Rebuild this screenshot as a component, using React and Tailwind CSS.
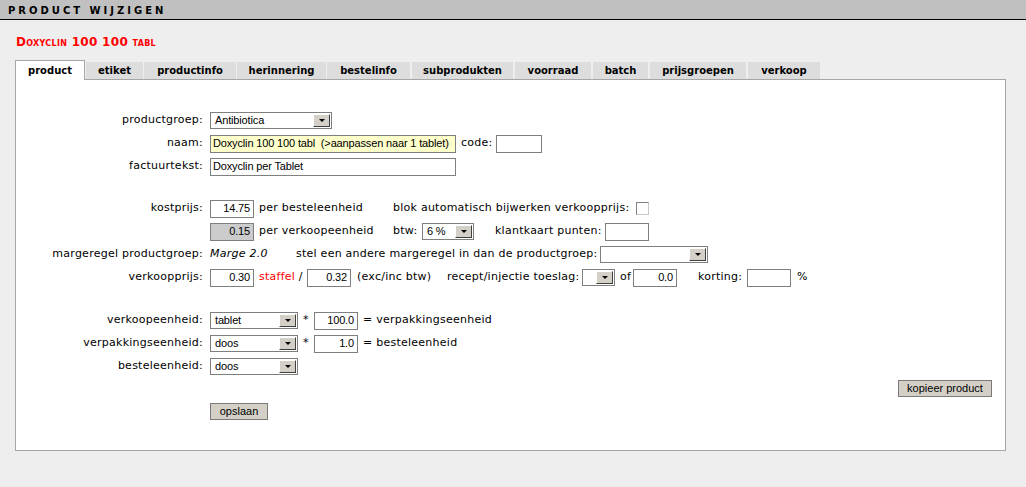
import React from "react"

const label = "font-['DejaVu_Sans',sans-serif] text-[11px] tracking-[0.25px] text-black whitespace-nowrap"
const field = "font-['Liberation_Sans',Arial,sans-serif] text-[11px] tracking-[-0.15px] text-black whitespace-pre"

const tabs = [
  { name: "product", cls: "w-[70px]", active: true },
  { name: "etiket", cls: "w-[57px] ml-[1px]" },
  { name: "productinfo", cls: "w-[92px] ml-[1px]" },
  { name: "herinnering", cls: "w-[89px] ml-[1px]" },
  { name: "bestelinfo", cls: "w-[83px] ml-[1px]" },
  { name: "subprodukten", cls: "w-[101px] ml-[2px]" },
  { name: "voorraad", cls: "w-[76px] ml-[2px]" },
  { name: "batch", cls: "w-[55px] ml-[2px]" },
  { name: "prijsgroepen", cls: "w-[96px] ml-[2px]" },
  { name: "verkoop", cls: "w-[72px] ml-[2px]" },
]

function Input({ w = "w-[44px]", value = "", left, bg = "bg-white" }) {
  return (
    <div className={`${w} ${bg} h-[18px] shrink-0 border border-[#7f7f7f] flex items-center ${left ? "justify-start pl-[2px]" : "justify-end pr-[3px]"} ${field}`}>
      {value}
    </div>
  )
}

function Select({ w, value = "" }) {
  return (
    <div className={`${w} h-[17px] shrink-0 border border-[#7f7f7f] bg-white flex items-center p-[1px]`}>
      <span className={`flex-1 pl-[3px] overflow-hidden ${field}`}>{value}</span>
      <span className="w-[17px] h-full bg-[#d4d0c8] border border-t-white border-l-white border-r-[#404040] border-b-[#404040] flex items-center justify-center">
        <span className="w-0 h-0 border-l-[3px] border-r-[3px] border-t-[3px] border-l-transparent border-r-transparent border-t-black" />
      </span>
    </div>
  )
}

function Row({ name, children }) {
  return (
    <div className="flex h-[23px] items-center">
      <span className={`w-[187px] mr-[7px] shrink-0 text-right ${label}`}>{name}</span>
      {children}
    </div>
  )
}

function Button({ children }) {
  return (
    <div className={`h-[17px] px-[7px] bg-[#d4d0c8] border border-[#7a7a7a] flex items-center justify-center ${field} tracking-[0px]`}>
      {children}
    </div>
  )
}

export default function App() {
  return (
    <div className="min-h-screen bg-[#eeeeee]">
      <div className="h-[20px] bg-[#c0c0c0] border-b border-black pl-[8px] pt-[2px] flex items-center">
        <span className="leading-none font-['DejaVu_Sans',sans-serif] font-bold text-[10px] tracking-[3px] text-black">PRODUCT WIJZIGEN</span>
      </div>

      <div className="ml-[15px] mr-[20px]">
        <div className="mt-[16px] pl-[1px] h-[13px] leading-[13px] font-['DejaVu_Sans',sans-serif] font-bold text-[12px] tracking-[0.3px] text-[#ff0000] [font-variant:small-caps]">
          Doxyclin 100 100 tabl
        </div>

        <div className="mt-[11px] flex items-end h-[19px]">
          {tabs.map((t) =>
            t.active ? (
              <div key={t.name} className={`${t.cls} shrink-0 h-[20px] -mb-[1px] relative z-10 bg-white border border-b-0 border-[#a6a6a6] flex items-center justify-center font-['DejaVu_Sans',sans-serif] font-bold text-[10px] text-black`}>
                {t.name}
              </div>
            ) : (
              <div key={t.name} className={`${t.cls} shrink-0 h-[17px] bg-[#dddddd] flex items-center justify-center font-['DejaVu_Sans',sans-serif] font-bold text-[10px] text-black`}>
                {t.name}
              </div>
            )
          )}
        </div>

        <div className="bg-white border border-[#a6a6a6] pt-[29px] pb-[30px]">
          <Row name="productgroep:">
            <Select w="w-[122px]" value="Antibiotica" />
          </Row>
          <Row name="naam:">
            <Input w="w-[246px]" bg="bg-[#ffffcc]" left value="Doxyclin 100 100 tabl  (>aanpassen naar 1 tablet)" />
            <span className={`ml-[5px] w-[35px] ${label}`}>code:</span>
            <Input w="w-[46px]" />
          </Row>
          <Row name="factuurtekst:">
            <Input w="w-[246px]" left value="Doxyclin per Tablet" />
          </Row>

          <div className="h-[19px]" />

          <Row name="kostprijs:">
            <div className="w-[183px] flex items-center shrink-0">
              <Input value="14.75" />
              <span className={`ml-[5px] ${label}`}>per besteleenheid</span>
            </div>
            <span className={`w-[243px] shrink-0 ${label}`}>blok automatisch bijwerken verkoopprijs:</span>
            <span className="w-[13px] h-[13px] bg-white border border-t-[#808080] border-l-[#808080] border-r-[#c8c8c8] border-b-[#c8c8c8]" />
          </Row>
          <Row name="">
            <div className="w-[183px] flex items-center shrink-0">
              <Input value="0.15" bg="bg-[#cccccc]" />
              <span className={`ml-[5px] ${label}`}>per verkoopeenheid</span>
            </div>
            <span className={`w-[29px] shrink-0 ${label}`}>btw:</span>
            <Select w="w-[52px]" value="6 %" />
            <span className={`ml-[21px] w-[110px] shrink-0 ${label}`}>klantkaart punten:</span>
            <Input />
          </Row>
          <Row name="margeregel productgroep:">
            <span className={`w-[86px] shrink-0 italic ${label}`}>Marge 2.0</span>
            <span className={`w-[304px] shrink-0 ${label}`}>stel een andere margeregel in dan de productgroep:</span>
            <Select w="w-[108px]" />
          </Row>
          <Row name="verkoopprijs:">
            <Input value="0.30" />
            <span className={`ml-[5px] w-[48px] shrink-0 ${label}`}>
              <span className="text-[#ff0000]">staffel</span> /
            </span>
            <Input value="0.32" />
            <span className={`ml-[6px] w-[90px] shrink-0 ${label}`}>(exc/inc btw)</span>
            <span className={`w-[135px] shrink-0 ${label}`}>recept/injectie toeslag:</span>
            <Select w="w-[33px]" />
            <span className={`w-[18px] pl-[5px] shrink-0 ${label}`}>of</span>
            <Input value="0.0" />
            <span className={`w-[70px] pl-[21px] shrink-0 ${label}`}>korting:</span>
            <Input />
            <span className={`ml-[6px] ${label}`}>%</span>
          </Row>

          <div className="h-[20px]" />

          <Row name="verkoopeenheid:">
            <Select w="w-[88px]" value="tablet" />
            <span className={`w-[16px] pl-[5px] shrink-0 ${label}`}>*</span>
            <Input value="100.0" />
            <span className={`ml-[5px] ${label}`}>= verpakkingseenheid</span>
          </Row>
          <Row name="verpakkingseenheid:">
            <Select w="w-[88px]" value="doos" />
            <span className={`w-[16px] pl-[5px] shrink-0 ${label}`}>*</span>
            <Input value="1.0" />
            <span className={`ml-[5px] ${label}`}>= besteleenheid</span>
          </Row>
          <Row name="besteleenheid:">
            <Select w="w-[88px]" value="doos" />
          </Row>

          <div className="mt-[2px] flex justify-end mr-[13px]">
            <div className="w-[94px]">
              <Button>kopieer product</Button>
            </div>
          </div>
          <div className="mt-[6px] ml-[194px] w-[58px]">
            <Button>opslaan</Button>
          </div>
        </div>
      </div>
    </div>
  )
}
